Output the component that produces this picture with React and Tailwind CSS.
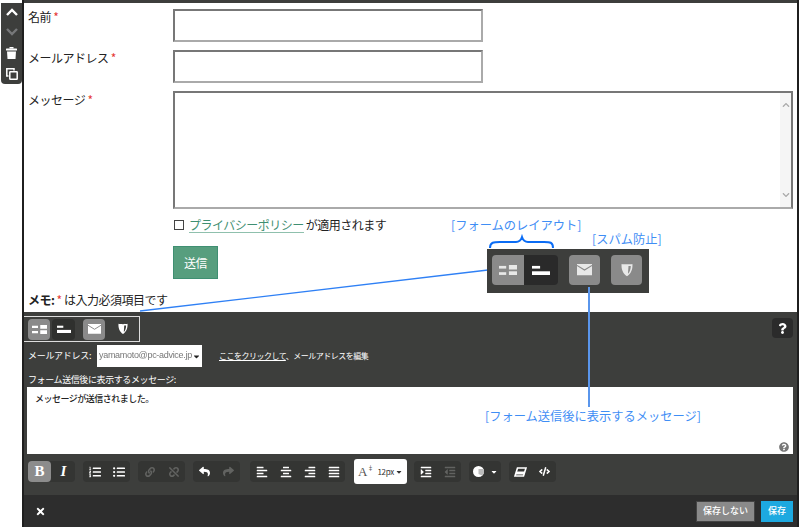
import React from 'react';
import {
  FaChevronUp, FaChevronDown, FaListOl, FaListUl, FaLink, FaUnlink,
  FaReply, FaShare, FaAlignLeft, FaAlignCenter, FaAlignRight, FaAlignJustify, FaIndent, FaOutdent,
  FaCaretDown, FaCode, FaQuestion, FaQuestionCircle, FaTimes,
} from 'react-icons/fa';

const Req = () => <span className="text-[#e53935]"> *</span>;

const TwoCols = ({ size = 18 }) => (
  <svg width={size} height={size * 0.6} viewBox="0 0 20 12" fill="currentColor">
    <rect x="0" y="1" width="8" height="3" />
    <rect x="11" y="0" width="9" height="5" />
    <rect x="0" y="8" width="8" height="3" />
    <rect x="11" y="7" width="9" height="5" />
  </svg>
);

const OneCol = ({ size = 18 }) => (
  <svg width={size} height={size * 0.6} viewBox="0 0 20 12" fill="currentColor">
    <rect x="0" y="1" width="9" height="3" />
    <rect x="0" y="7" width="20" height="5" />
  </svg>
);

const Shield = ({ size = 12, cut = '#8a8a8a' }) => (
  <svg width={size} height={size * 1.15} viewBox="0 0 12 14">
    <path d="M0.5 1 C3 1.5 9 1.5 11.5 1 C12 6 10 11 6 13.5 C2 11 0 6 0.5 1 Z" fill="currentColor" />
    <path d="M7.5 3 L9.8 3 C9.8 6 9 9 7 11 Z" fill={cut} />
  </svg>
);

const Mail = ({ size = 15 }) => (
  <svg width={size} height={size * 0.75} viewBox="0 0 16 12">
    <rect width="16" height="12" fill="currentColor" />
    <path d="M0 1.5 L8 6.5 L16 1.5" fill="none" stroke="#8a8a8a" strokeWidth="1.2" />
  </svg>
);

const Trash = () => (
  <svg width="11" height="12" viewBox="0 0 11 12" fill="currentColor">
    <rect x="3.5" y="0" width="4" height="1.5" />
    <rect x="0" y="1.5" width="11" height="2" rx="0.5" />
    <path d="M1 4.5 H10 L9.5 12 H1.5 Z" />
  </svg>
);

const Dup = () => (
  <svg width="12" height="12" viewBox="0 0 12 12" fill="none" stroke="currentColor" strokeWidth="1.5">
    <path d="M8 2.5 V0.8 H0.8 V8 H2.5" />
    <rect x="3.8" y="3.8" width="7.4" height="7.4" rx="0.5" />
  </svg>
);

const Chevron = ({ up }) => (
  <svg width="12" height="8" viewBox="0 0 12 8" fill="none" stroke="currentColor" strokeWidth="2.4">
    <path d={up ? 'M1 7 L6 2 L11 7' : 'M1 1 L6 6 L11 1'} />
  </svg>
);

const Eraser = () => (
  <svg width="13" height="10" viewBox="0 0 13 10" fill="none" stroke="currentColor" strokeWidth="1.6">
    <path d="M3.5 1 H12 L9.5 9 H1 Z" />
    <path d="M2 6 H10.5" strokeWidth="3" />
  </svg>
);

const Palette = () => (
  <svg width="11" height="11" viewBox="0 0 11 11">
    <circle cx="5.5" cy="5.5" r="5.5" fill="#fff" />
    <path d="M5.5 3 H10.5 A5.5 5.5 0 0 1 9 9.5 L5.5 8 Z" fill="#bbb" />
  </svg>
);

const ModeTab = ({ active, children, className = '' }) => (
  <div className={`flex items-center justify-center text-white rounded-sm ${active ? 'bg-[#8a8a8a]' : ''} ${className}`}>
    {children}
  </div>
);

const ToolBtn = ({ children, dim, active }) => (
  <div className={`w-[23px] h-[21px] flex items-center justify-center rounded-sm ${active ? 'bg-[#8c8c8c]' : ''} ${dim ? 'text-[#626361]' : 'text-white'}`}>
    {children}
  </div>
);

const ToolGroup = ({ children, className = '' }) => (
  <div className={`flex gap-[1px] h-[21px] bg-[#343533] rounded-sm ${className}`}>{children}</div>
);

const App = () => {
  return (
    <div className="relative w-[800px] h-[527px] overflow-hidden bg-white flex text-[#222] font-['Noto_Sans_CJK_JP','Liberation_Sans',sans-serif]">
      {/* left gutter */}
      <div className="w-[22px] shrink-0" />

      <div className="w-[777px] shrink-0 flex flex-col border-x-2 border-[#1f1f1f]">
        <div className="h-[3px] bg-[#3d3e3c]" />

        {/* form */}
        <div className="h-[309px] pl-1 pt-[6px] text-xs tracking-[-0.5px]">
          <div className="grid grid-cols-[145px_310px] h-[33px] mb-[8px]">
            <div className="leading-[16px]">名前<Req /></div>
            <div className="border-2 border-[#777] border-b-[#aaa] border-r-[#aaa]" />
          </div>
          <div className="grid grid-cols-[145px_310px] h-[33px] mb-[8px]">
            <div className="leading-[16px]">メールアドレス<Req /></div>
            <div className="border-2 border-[#777] border-b-[#aaa] border-r-[#aaa]" />
          </div>
          <div className="grid grid-cols-[145px_620px] h-[118px]">
            <div className="leading-[18px]">メッセージ<Req /></div>
            <div className="border-2 border-[#777] border-b-[#aaa] flex justify-end">
              <div className="w-[11px] bg-[#f5f5f5] flex flex-col items-center justify-between py-2 text-[#aaa]">
                <FaChevronUp size={8} />
                <FaChevronDown size={8} />
              </div>
            </div>
          </div>
          <div className="pl-[146px] mt-[8px] h-[16px] flex items-center leading-[16px]">
            <span className="w-[10px] h-[10px] border border-[#444] mr-[5px]" />
            <span className="text-[#3f8f72] border-b border-[#8fc0ad] leading-[15px] mr-[2px]">プライバシーポリシー</span>
            <span>が適用されます</span>
          </div>
          <div className="pl-[145px] mt-[13px]">
            <div className="w-[45px] h-[33px] flex items-center justify-center bg-[#579e7e] border border-[#3f8f72] text-white">送信</div>
          </div>
          <div className="mt-[13px] leading-[16px]"><b>メモ:</b> <span className="text-[#e53935]">*</span> は入力必須項目です</div>
        </div>

        {/* editor */}
        <div className="h-[183px] bg-[#3d3e3c] text-white flex flex-col">
          <div className="flex justify-between pt-[4px] h-[33px]">
            <div className="w-[116px] h-[26px] border border-[#ddd] border-l-0 flex items-center gap-[2px] pl-[4px]">
              <ModeTab active className="w-[22px] h-[21px]"><TwoCols size={15} /></ModeTab>
              <ModeTab className="w-[23px] h-[21px] bg-[#2f302e]"><OneCol size={14} /></ModeTab>
              <ModeTab active className="w-[22px] h-[21px] ml-[6px]"><Mail size={13} /></ModeTab>
              <ModeTab className="w-[22px] h-[21px] ml-[5px]"><Shield size={10} cut="#3d3e3c" /></ModeTab>
            </div>
            <div className="w-[21px] h-[20px] mr-[4px] mt-[2px] rounded-sm bg-[#2b2b2b] flex items-center justify-center">
              <FaQuestion size={11} />
            </div>
          </div>

          <div className="flex items-center h-[22px] pl-1 text-[9px] tracking-[-0.3px]">
            <span className="w-[69px]">メールアドレス:</span>
            <div className="w-[105px] h-[22px] bg-white flex items-center pl-[2px] pr-[1px]">
              <span className="flex-1 text-[#777] text-[9px] blur-[0.6px] font-['Liberation_Sans',sans-serif]">yamamoto@pc-advice.jp</span>
              <FaCaretDown size={9} className="text-[#222]" />
            </div>
            <span className="ml-[17px] text-[8px] tracking-[-0.5px]"><span className="underline">ここをクリックして</span>、メールアドレスを編集</span>
          </div>

          <div className="pl-1 mt-[6px] h-[14px] leading-[14px] text-[9px] tracking-[-0.4px]">フォーム送信後に表示するメッセージ:</div>

          <div className="relative ml-[3px] mr-[4px] h-[67px] bg-white text-[#222] text-[9px] font-medium tracking-[-0.5px] px-[8px] pt-[5px] leading-[14px]">
            メッセージが送信されました。
            <FaQuestionCircle size={10} className="absolute right-[4px] bottom-[2px] text-[#777]" />
          </div>

          <div className="flex items-center h-[21px] mt-[7px] pl-1 gap-[8px]">
            <ToolGroup>
              <ToolBtn active><span className="font-['Liberation_Serif',serif] font-bold text-[15px]">B</span></ToolBtn>
              <ToolBtn><span className="font-['Liberation_Serif',serif] font-bold italic text-[15px]">I</span></ToolBtn>
            </ToolGroup>
            <ToolGroup>
              <ToolBtn><FaListOl size={12} /></ToolBtn>
              <ToolBtn><FaListUl size={12} /></ToolBtn>
            </ToolGroup>
            <ToolGroup>
              <ToolBtn dim><FaLink size={10} /></ToolBtn>
              <ToolBtn dim><FaUnlink size={10} /></ToolBtn>
            </ToolGroup>
            <ToolGroup>
              <ToolBtn><FaReply size={11} /></ToolBtn>
              <ToolBtn dim><FaShare size={11} /></ToolBtn>
            </ToolGroup>
            <ToolGroup className="ml-[2px]">
              <ToolBtn><FaAlignLeft size={12} /></ToolBtn>
              <ToolBtn><FaAlignCenter size={12} /></ToolBtn>
              <ToolBtn><FaAlignRight size={12} /></ToolBtn>
              <ToolBtn><FaAlignJustify size={12} /></ToolBtn>
            </ToolGroup>
            <div className="w-[53px] h-[25px] ml-[1px] bg-white rounded-[3px] text-[#333] flex items-center justify-center gap-[4px] text-[8px]">
              <span className="flex items-start text-[#555]">
                <span className="font-['Liberation_Serif',serif] text-[13px] leading-[13px]">A</span>
                <span className="text-[6px] leading-[6px]">‡</span>
              </span>
              <span className="tracking-[-0.3px]">12px</span>
              <FaCaretDown size={8} className="-ml-[3px]" />
            </div>
            <ToolGroup className="-ml-[1px]">
              <ToolBtn><FaIndent size={12} /></ToolBtn>
              <ToolBtn dim><FaOutdent size={12} /></ToolBtn>
            </ToolGroup>
            <ToolGroup>
              <div className="w-[32px] h-[21px] flex items-center justify-center gap-[6px] text-white">
                <Palette />
                <FaCaretDown size={8} />
              </div>
            </ToolGroup>
            <ToolGroup>
              <ToolBtn><Eraser /></ToolBtn>
              <ToolBtn><FaCode size={11} /></ToolBtn>
            </ToolGroup>
          </div>
        </div>

        {/* footer */}
        <div className="h-[32px] bg-[#2d2d2d] text-white flex items-center justify-between pl-[11px] pr-[4px]">
          <FaTimes size={11} />
          <div className="flex gap-[6px] text-[9px] font-medium">
            <div className="w-[59px] h-[21px] bg-[#8a8a8a] border border-[#444] flex items-center justify-center">保存しない</div>
            <div className="w-[32px] h-[21px] bg-[#1da9e0] flex items-center justify-center">保存</div>
          </div>
        </div>
      </div>

      {/* floating block toolbar */}
      <div className="absolute left-[1px] top-[3px] w-[21px] h-[81px] bg-[#3d3e3c] rounded-b-sm text-white flex flex-col items-center pt-[5px]">
        <Chevron up />
        <div className="mt-[12px] text-[#77787a]"><Chevron /></div>
        <div className="mt-[11px]"><Trash /></div>
        <div className="mt-[9px]"><Dup /></div>
      </div>

      {/* annotations */}
      <svg className="absolute left-0 top-0 pointer-events-none" width="800" height="527">
        <line x1="140" y1="311" x2="488" y2="270" stroke="#2f80f5" strokeWidth="1.3" />
        <path d="M490 248 C490 242 494 242 500 242 L516 242 C519 242 521 240 522 237 C523 240 525 242 528 242 L544 242 C550 242 553 242 553 248" fill="none" stroke="#0a6cf5" strokeWidth="2" />
      </svg>
      <div className="absolute left-[487px] top-[249px] w-[162px] h-[44px] bg-[#3d3e3c] flex items-start pt-[6px] pl-[5px] text-[#e8e8e8]">
        <div className="w-[32px] h-[30px] rounded-l-sm bg-[#8a8a8a] flex items-center justify-center"><TwoCols size={18} /></div>
        <div className="w-[34px] h-[30px] rounded-r-sm bg-[#2a2a2a] flex items-center justify-center text-white"><OneCol size={18} /></div>
        <div className="w-[31px] h-[30px] ml-[11px] rounded-sm bg-[#8a8a8a] flex items-center justify-center"><Mail size={15} /></div>
        <div className="w-[31px] h-[30px] ml-[11px] rounded-sm bg-[#8a8a8a] flex items-center justify-center"><Shield size={12} /></div>
      </div>
      <div className="absolute left-[588px] top-[287px] w-[2px] h-[120px] bg-[#5a96ec]" />
      <div className="absolute left-[451px] top-[216px] text-[12.25px] leading-[18px] text-[#3f8ef5]">[フォームのレイアウト]</div>
      <div className="absolute left-[592px] top-[230px] text-[12.25px] leading-[18px] text-[#3f8ef5]">[スパム防止]</div>
      <div className="absolute left-[485px] top-[407px] text-[12.25px] leading-[18px] text-[#3f8ef5]">[フォーム送信後に表示するメッセージ]</div>
    </div>
  );
};

export default App;
